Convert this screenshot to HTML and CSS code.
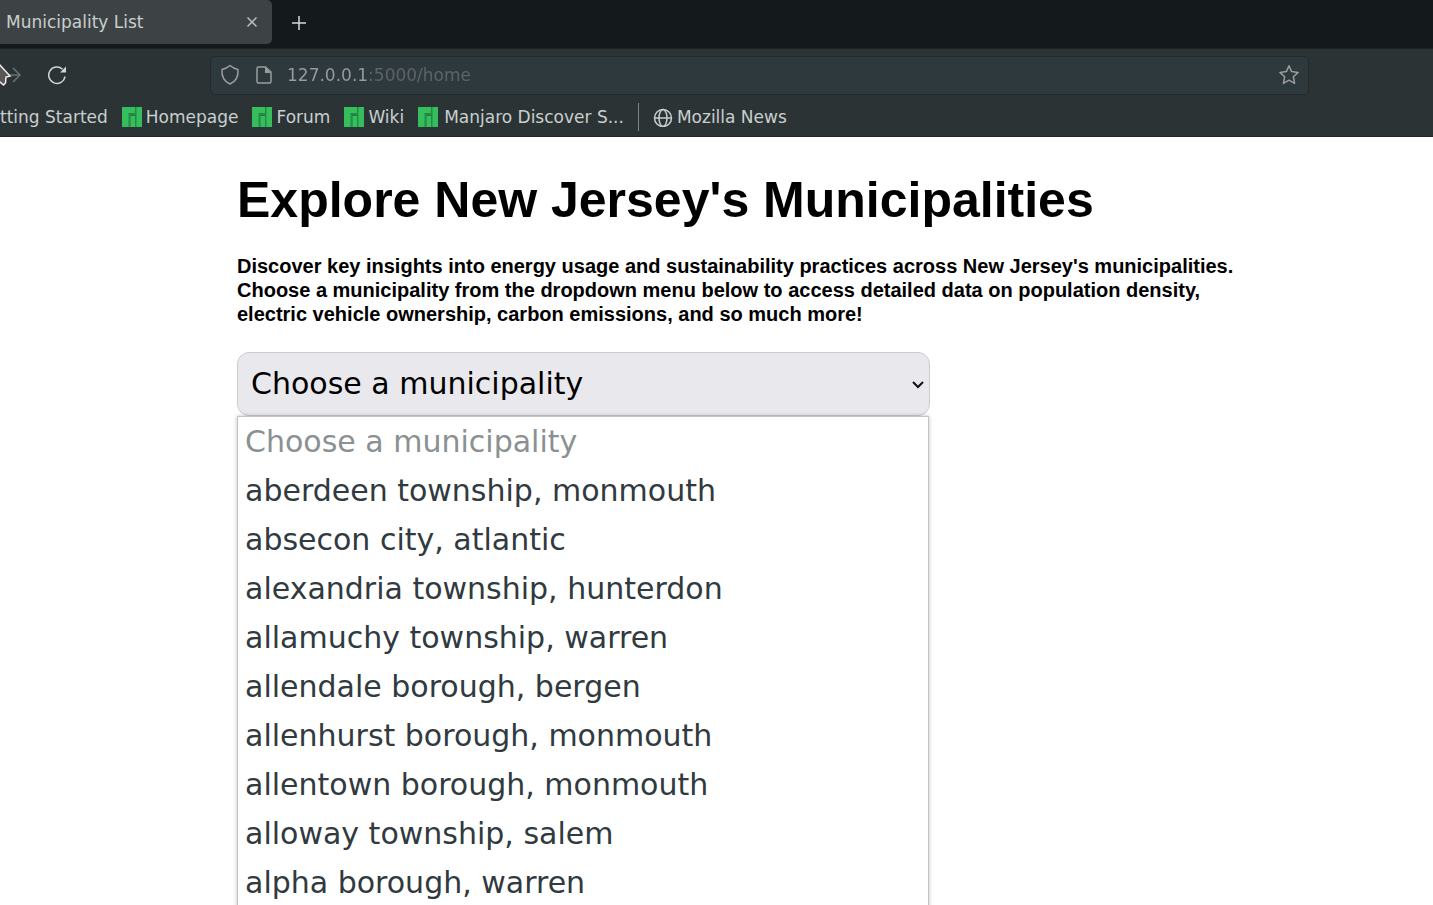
FILE: index.html
```html
<!DOCTYPE html>
<html lang="en">
<head>
<meta charset="utf-8">
<meta name="viewport" content="width=device-width, initial-scale=1">
<title>Municipality List</title>
<link rel="stylesheet" href="styles.css">
</head>
<body>
<svg class="sprite" aria-hidden="true">
  <symbol id="manjaro" viewBox="0 0 20 20">
    <path fill="#268a45" d="M0 0h20v20H0z"/>
    <path fill="#35bf5c" d="M0 0h13v6H6.500v14H0zM7.500 8H13v12H7.500zM14.500 0H20v20h-5.500z"/>
    <path fill="none" stroke="#237a40" d="M8 20V8.500h5"/>
  </symbol>
</svg>

<header class="browser">
  <div class="tab-strip">
    <div class="tab">
      <span class="tab-title">Municipality List</span>
      <button class="icon-button close" type="button" aria-label="Close tab">
        <svg width="12" height="12" viewBox="0 0 12 12"><path class="line" d="M1.500 1.500l9 9M10.500 1.500l-9 9"/></svg>
      </button>
    </div>
    <button class="icon-button add" type="button" aria-label="New tab">
      <svg width="16" height="16" viewBox="0 0 16 16"><path class="line" d="M8 1v14M1 8h14"/></svg>
    </button>
  </div>

  <div class="toolbar">
    <button class="icon-button forward" type="button" aria-label="Forward" disabled>
      <svg width="22" height="26" viewBox="0 0 22 26"><path class="line" d="M8 13h12M13 6l7 7-7 7"/></svg>
    </button>
    <button class="icon-button reload" type="button" aria-label="Reload">
      <svg width="20" height="20" viewBox="0 0 20 20"><path class="line" d="M18 11.500A8.200 8.200 0 1 1 15.500 4.200"/><path fill="currentColor" d="M19 1.500v6h-6z"/></svg>
    </button>
    <div class="address">
      <svg width="20" height="22" viewBox="0 0 20 22" aria-hidden="true"><path class="line" stroke-linejoin="round" d="M10 1.500c2.200 2 4.800 3.300 8 4 .5 6.500-2.200 12-8 14.500C4.200 17.500 1.500 12 2 5.500c3.200-.7 5.800-2 8-4z"/></svg>
      <svg width="16" height="18" viewBox="0 0 16 18" aria-hidden="true"><path class="line" d="M2.500 1h7L15 6v9.500q0 1.500-1.500 1.500h-11Q1 17 1 15.500v-13Q1 1 2.500 1z"/><path fill="currentColor" d="M9 1l6 6H9z"/></svg>
      <input class="url" type="text" aria-label="Address" value="127.0.0.1:5000/home" spellcheck="false">
      <button class="icon-button star" type="button" aria-label="Bookmark this page">
        <svg width="22" height="22" viewBox="0 0 22 22"><path class="line" stroke-linejoin="round" d="M11 1.800l2.600 5.800 6.500.8-4.800 4.300 1.300 6.700-5.600-3.200-5.600 3.200 1.300-6.700L1.900 8.400l6.500-.8z"/></svg>
      </button>
    </div>
  </div>

  <nav class="bookmarks" aria-label="Bookmarks">
    <a class="bookmark" href="#">tting Started</a>
    <a class="bookmark" href="#"><svg width="20" height="20"><use href="#manjaro"/></svg>Homepage</a>
    <a class="bookmark" href="#"><svg width="20" height="20"><use href="#manjaro"/></svg>Forum</a>
    <a class="bookmark" href="#"><svg width="20" height="20"><use href="#manjaro"/></svg>Wiki</a>
    <a class="bookmark roomy" href="#"><svg width="20" height="20"><use href="#manjaro"/></svg>Manjaro Discover S...</a>
    <span class="divider"></span>
    <a class="bookmark" href="#"><svg width="20" height="20" viewBox="0 0 20 20"><g class="line"><circle cx="10" cy="11" r="8.500"/><ellipse cx="10" cy="11" rx="4" ry="8.500"/><path d="M1.500 11h17"/></g></svg>Mozilla News</a>
  </nav>
  <svg class="pointer" width="12" height="28" viewBox="0 0 12 28" aria-hidden="true"><path fill="#5a5654" stroke="#eeeeec" stroke-width="1.500" d="M-1 3l11 12-4 1-.5 6-2 2-4.500-4z"/></svg>
</header>

<main class="page">
  <h1>Explore New Jersey's Municipalities</h1>
  <p class="intro">Discover key insights into energy usage and sustainability practices across New Jersey's municipalities. Choose a municipality from the dropdown menu below to access detailed data on population density, electric vehicle ownership, carbon emissions, and so much more!</p>
  <div class="picker">
    <select class="select" aria-label="Municipality">
      <option>Choose a municipality</option>
    </select>
    <svg class="chevron" width="12" height="8" viewBox="0 0 12 8" aria-hidden="true"><path fill="none" stroke="#111" stroke-width="2" d="M1 1l5 5 5-5"/></svg>
    <ul class="options" role="listbox" aria-label="Municipalities">
      <li role="option" aria-disabled="true" class="option placeholder">Choose a municipality</li>
      <li role="option" class="option">aberdeen township, monmouth</li>
      <li role="option" class="option">absecon city, atlantic</li>
      <li role="option" class="option">alexandria township, hunterdon</li>
      <li role="option" class="option">allamuchy township, warren</li>
      <li role="option" class="option">allendale borough, bergen</li>
      <li role="option" class="option">allenhurst borough, monmouth</li>
      <li role="option" class="option">allentown borough, monmouth</li>
      <li role="option" class="option">alloway township, salem</li>
      <li role="option" class="option">alpha borough, warren</li>
    </ul>
  </div>
</main>
</body>
</html>
```
FILE: styles.css
```css
* { box-sizing: border-box; }

body {
  display: flex;
  flex-direction: column;
  min-height: 100vh;
  margin: 0;
  overflow: hidden;
  background: #fff;
  color: #000;
  font-family: "Liberation Sans", Arial, sans-serif;
}

.sprite { position: absolute; width: 0; height: 0; }

.line { fill: none; stroke: currentColor; stroke-width: 1.5; }

.icon-button {
  display: flex;
  padding: 0;
  border: 0;
  background: none;
}

/* Browser window */
.browser {
  position: relative;
  background: #2c3335;
  border-bottom: 1px solid #202527;
  color: #c8cfcf;
  font: 17px/24px "DejaVu Sans", sans-serif;
}

.tab-strip {
  display: flex;
  align-items: flex-start;
  height: 49px;
  background: #14191b;
  border-bottom: 1px solid #1d2325;
}

.tab {
  display: flex;
  align-items: center;
  justify-content: space-between;
  width: 272px;
  height: 44px;
  padding: 0 14px 0 6px;
  background: #3d4244;
  border-radius: 0 5px 5px 0;
}

.close { color: #b9bebe; }
.add { margin: 15px 19px; color: #d4d8d8; }

.toolbar {
  display: flex;
  align-items: center;
  height: 52px;
}

.forward { color: #697072; }
.reload { margin-left: 25px; color: #d0d6d6; }

.address {
  display: flex;
  align-items: center;
  flex: 1;
  height: 39px;
  margin: 0 124px 0 143px;
  padding: 0 8px 0 9px;
  border: 1px solid #23292c;
  border-radius: 5px;
  background: #2e393e;
  color: #999d9d;
}

.address > svg:nth-child(2) { margin-left: 16px; }

.url {
  flex: 1;
  min-width: 0;
  height: 24px;
  margin-left: 15px;
  padding: 0;
  border: 0;
  outline: 0;
  background: linear-gradient(to right, #989c9d 83px, #5d6466 83px);
  -webkit-background-clip: text;
  background-clip: text;
  color: transparent;
  font: inherit;
}

.star { color: #999d9d; }

.bookmarks {
  display: flex;
  align-items: center;
  gap: 14px;
  height: 35px;
  padding-bottom: 3px;
}

.bookmark {
  display: flex;
  align-items: center;
  gap: 4px;
  color: inherit;
  text-decoration: none;
  white-space: nowrap;
}

.roomy { gap: 6px; }
.divider { width: 1px; height: 28px; background: #7d8384; }
.pointer { position: absolute; left: 0; top: 61px; }

/* Page */
.page {
  flex: 1;
  width: 70%;
  margin-left: 237px;
  padding-top: 34px;
}

h1 {
  margin: 0;
  font-size: 50px;
  line-height: 58px;
}

.intro {
  margin: 25px 0 26px;
  font-size: 20px;
  font-weight: bold;
  line-height: 24px;
}

.picker {
  position: relative;
  width: 693px;
  max-width: 100%;
  font: 30px/49px "DejaVu Sans", sans-serif;
}

.select {
  display: block;
  width: 100%;
  height: 64px;
  padding: 0 13px 2px;
  border: 1px solid #ccccce;
  border-radius: 12px;
  outline: 0;
  appearance: none;
  background: #e9e8ed;
  color: #000;
  font: inherit;
}

.chevron { position: absolute; right: 6px; top: 29px; }

.options {
  position: absolute;
  top: 64px;
  left: 0;
  right: 1px;
  margin: 0;
  padding: 0 7px;
  border: 1px solid #c4c4c6;
  background: #fff;
  box-shadow: 0 0 4px rgba(0, 0, 0, 0.25);
  color: #303a3f;
  list-style: none;
}

.option { white-space: nowrap; }
.placeholder { color: #8b9092; }
```
